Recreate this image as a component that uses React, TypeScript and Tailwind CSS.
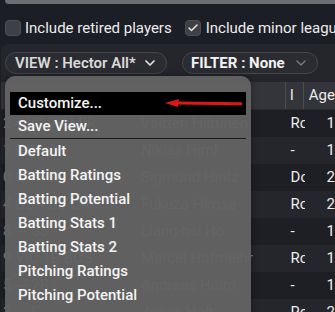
import { Check, ChevronDown } from 'lucide-react';

const rows = [
  { left: '2  ORC  2B   MIR', name: 'Valtteri Hiltunen', l: 'Ro', age: '1' },
  { left: '1   BOS  -', name: 'Niklas Himl', l: '-', age: '1' },
  { left: '0  CNT  3B   CNT', name: 'Sigmund Hintz', l: 'Do', age: '2' },
  { left: '4  OBA  SS   OAK', name: 'Fukuzo Hirose', l: 'Ro', age: '2' },
  { left: '8   ---   SS   -', name: 'Liang-hsi Ho', l: '-', age: '1' },
  { left: '9  VIC  1B   BOS', name: 'Marcel Hofmeihr', l: 'Ro', age: '1' },
  { left: '5   ---   2B   -', name: 'Andreas Holm', l: '-', age: '1' },
  { left: '3   ---   C    -', name: 'Jonas Holt', l: 'Ro', age: '2' },
];

const menuItems = [
  'Batting Ratings',
  'Batting Potential',
  'Batting Stats 1',
  'Batting Stats 2',
  'Pitching Ratings',
  'Pitching Potential',
];

export default function App() {
  return (
    <div className="relative w-[335px] h-[312px] overflow-hidden bg-[#1c1e25] text-[#ececec]" style={{ fontFamily: 'Roboto, "Noto Sans", sans-serif' }}>
      {/* top strip */}
      <div className="ml-[5px] h-[4px] rounded-bl-[6px] bg-[#6d6e72]" />

      {/* checkboxes */}
      <div className="flex items-center h-[32px] mt-[8px] pl-[5px] text-[15px] whitespace-nowrap overflow-hidden">
        <span className="shrink-0 w-[16px] h-[16px] rounded-[4px] bg-[#3f4045] border border-[#4d4e53] mr-[4px]" />
        <span className="shrink-0 mr-[13px]">Include retired players</span>
        <span className="shrink-0 w-[16px] h-[16px] rounded-[4px] bg-[#3f4045] border border-[#4d4e53] flex items-center justify-center mr-[5px]">
          <Check size={12} strokeWidth={3} className="text-[#e6e6e6]" />
        </span>
        <span className="shrink-0">Include minor leagues</span>
      </div>

      {/* panel */}
      <div className="bg-[#24262c] rounded-tl-[8px] ml-[1px] h-[276px]">
        <div className="flex items-center gap-[15px] pt-[8px] pl-[4px]">
          <div className="shrink-0 h-[22px] w-[162px] rounded-full bg-[#2b2c31] border border-[#45464b] flex items-center pl-[9px] gap-[6px] text-[15px] font-semibold text-[#d9d9d9]">
            <span>VIEW : Hector All*</span>
            <ChevronDown size={16} strokeWidth={2.6} className="text-[#e0e0e0]" />
          </div>
          <div className="shrink-0 h-[22px] w-[136px] rounded-full bg-[#2b2c31] border border-[#45464b] flex items-center pl-[8px] gap-[8px] text-[15px] font-bold text-[#f2f2f2]">
            <span>FILTER : None</span>
            <ChevronDown size={16} strokeWidth={2.2} className="text-[#77787c]" />
          </div>
        </div>

        {/* table */}
        <div className="mt-[8px] text-[15px] whitespace-nowrap">
          <div className="flex h-[28px] bg-[#34353a] border-b border-[#2a2b30]">
            <div className="w-[286px] border-r border-[#4b4c51]" />
            <div className="w-[18px] border-r border-[#4b4c51] flex items-center pl-[4px]">l</div>
            <div className="flex-1 flex items-center pl-[5px]">Age</div>
          </div>
          {rows.map((r, i) => (
            <div key={i} className={`flex h-[27px] items-center ${i % 2 === 0 ? 'bg-[#1e1f24]' : 'bg-[#25262b]'}`}>
              <div className="w-[286px] flex items-center text-[#8c8c8c] overflow-hidden">
                <span className="w-[140px] pl-[2px] shrink-0">{r.left}</span>
                <span>{r.name}</span>
              </div>
              <div className="w-[18px] overflow-hidden pl-[4px]">{r.l}</div>
              <div className="flex-1 pl-[22px]">{r.age}</div>
            </div>
          ))}
        </div>
      </div>

      {/* dropdown menu */}
      <div className="absolute left-[5px] top-[76px] w-[246px] h-[240px] rounded-t-[10px] bg-[#636363]/[0.96] pt-[16px] px-[5px] text-[15px] font-medium text-[#f4f4f4] shadow-[0_0_6px_rgba(0,0,0,0.4)]">
        <div className="relative h-[23px] bg-black flex items-center pl-[8px]">
          Customize...
          <svg className="absolute left-[155px] top-[6px]" width="78" height="10" viewBox="0 0 78 10">
            <path d="M12 5 L76 5.8" stroke="#e01616" strokeWidth="3" strokeLinecap="round" />
            <path d="M0 5 L14 1 L13 9 Z" fill="#e01616" />
          </svg>
        </div>
        <div className="h-[23px] flex items-center pl-[8px]">Save View...</div>
        <div className="h-[1px] bg-[#1a1a1a]" />
        <div className="h-[24px] flex items-center pl-[8px]">Default</div>
        {menuItems.map((m) => (
          <div key={m} className="h-[24px] flex items-center pl-[8px]">{m}</div>
        ))}
      </div>
    </div>
  );
}
